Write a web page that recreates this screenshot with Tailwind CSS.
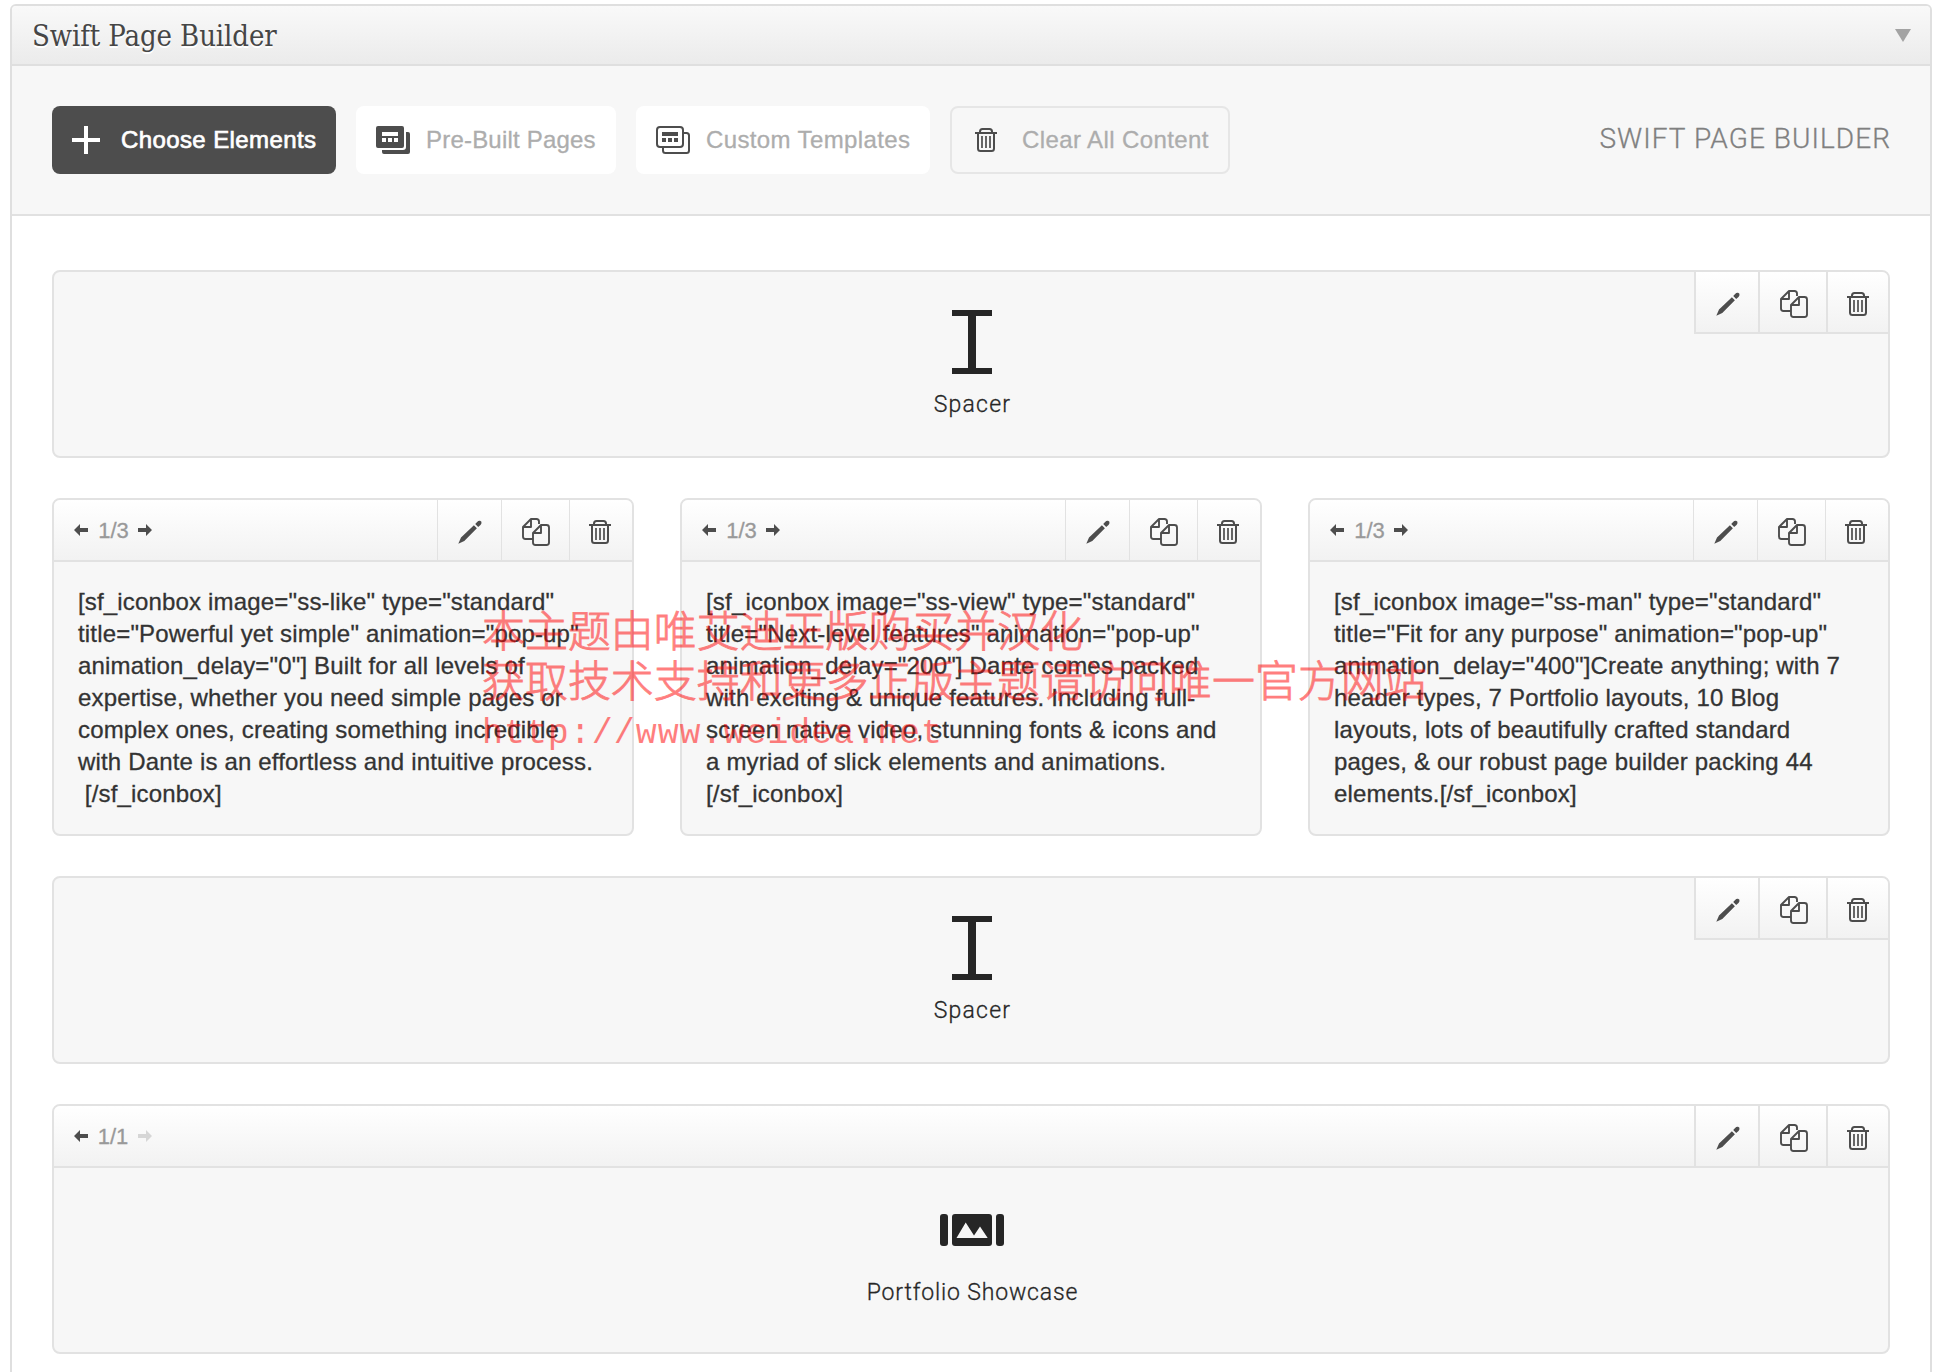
<!DOCTYPE html>
<html lang="en">
<head>
<meta charset="utf-8">
<title>Swift Page Builder</title>
<script src="https://cdn.jsdelivr.net/npm/@tailwindcss/browser@4"></script>
</head>
<body class="relative h-[1372px] overflow-hidden bg-white pt-1 pl-[10px] font-['Liberation_Sans',Arial,sans-serif] text-[#333]">

<!-- Icon set -->
<svg class="hidden">
  <symbol id="pencil" viewBox="0 0 24 24"><path fill="#4d4d4d" d="M.3 23.700 3 17.400 15.900 5.200l3 3L6.300 20.900zM17.200 4.100l1.900-2.100Q20.400.5 22 .8q1.800.4 1.500 2.300-.2 1.200-1 1.900L20.200 7z"/></symbol>
  <symbol id="copy" viewBox="0 0 28 28"><path fill="none" stroke="#4d4d4d" stroke-width="1.900" stroke-linejoin="round" d="M17 6V3.500Q17 1 14.500 1H9L1 9V18.500Q1 21 3.500 21H10.500M9 1V9H1M19 7H24.500Q27 7 27 9.500V24.500Q27 27 24.500 27H13.500Q11 27 11 24.500V15ZM19 7V15H11"/></symbol>
  <symbol id="trash" viewBox="0 0 22 24"><path fill="none" stroke="#4d4d4d" stroke-width="2" d="M0 5H22M3 5V20.500Q3 23 5.500 23H16.500Q19 23 19 20.500V5M5 5V3.500Q5 1 7.500 1H14.500Q17 1 17 3.500V5"/><path fill="none" stroke="#4d4d4d" stroke-width="1.700" d="M7 8V20M11 8V20M15 8V20"/></symbol>
  <symbol id="left" viewBox="0 0 14 12"><path fill="currentColor" d="M0 6 6 0V4H14V8H6V12z"/></symbol>
  <symbol id="right" viewBox="0 0 14 12"><path fill="currentColor" d="M14 6 8 0V4H0V8H8V12z"/></symbol>
  <symbol id="spacer" viewBox="0 0 40 64"><path fill="#262626" d="M0 0H40V6H24V58H40V64H0V58H16V6H0z"/></symbol>
</svg>

<div class="h-[1400px] w-[1922px] rounded-t-md border-2 border-[#dfdfdf]">
  <!-- Title bar -->
  <header class="flex h-[60px] items-center justify-between rounded-t border-b-2 border-[#dfdfdf] bg-linear-to-b from-[#f9f9f9] to-[#ebebeb] pr-[19px] pl-5">
    <h1 class="pt-0.5 font-['DejaVu_Serif_Condensed','DejaVu_Serif',serif] text-[29px] leading-none tracking-[-0.1px] text-[#464646] text-shadow-[0_2px_0_#fff]">Swift Page Builder</h1>
    <svg class="mt-px h-[13px] w-4" viewBox="0 0 16 13"><path fill="#a3a3a3" d="M0 0H16L8 13z"/></svg>
  </header>

  <!-- Toolbar -->
  <div class="flex h-[150px] items-center justify-between border-b-2 border-[#e1e1e1] bg-[#f7f7f7] px-10">
    <div class="flex gap-5 text-2xl leading-none tracking-[0.3px] text-[#adadad] [-webkit-text-stroke:0.3px_currentColor]">
      <button class="flex h-[68px] w-[284px] items-center gap-[21px] rounded-lg bg-[#4d4d4d] pl-5 tracking-[0.4px] text-white [-webkit-text-stroke:0.7px_white]">
        <svg class="size-7" viewBox="0 0 28 28"><path fill="#fff" d="M12 0h4v12h12v4H16v12h-4V16H0v-4h12z"/></svg>Choose Elements</button>
      <button class="flex h-[68px] w-[260px] items-center gap-4 rounded-lg bg-white pl-5 tracking-[0.2px]">
        <svg class="h-7 w-[34px]" viewBox="0 0 34 28"><path fill="#4d4d4d" fill-rule="evenodd" d="M2 0H26Q28 0 28 2V20Q28 22 26 22H2Q0 22 0 20V2Q0 0 2 0ZM6 6V10H22V6ZM6 12V16H10V12ZM12 12V16H16V12ZM18 12V16H22V12ZM30 6H32Q34 6 34 8V26Q34 28 32 28H8Q6 28 6 26V24H27Q30 24 30 21Z"/></svg>Pre-Built Pages</button>
      <button class="flex h-[68px] w-[294px] items-center gap-4 rounded-lg bg-white pl-5 tracking-[0.38px]">
        <svg class="h-7 w-[34px]" viewBox="0 0 34 28"><path fill="none" stroke="#4d4d4d" stroke-width="2" d="M4 1H24Q27 1 27 4V18Q27 21 24 21H4Q1 21 1 18V4Q1 1 4 1ZM28 7H30.500Q33 7 33 9.500V24.500Q33 27 30.500 27H9.500Q7 27 7 24.500V22"/><path fill="#4d4d4d" d="M6 6H22V10H6ZM6 12H10V16H6ZM12 12H16V16H12ZM18 12H22V16H18Z"/></svg>Custom Templates</button>
      <button class="flex h-[68px] w-[280px] items-center gap-[25px] rounded-lg border-2 border-[#e6e6e6] pl-[23px] tracking-[0.4px]">
        <svg class="h-6 w-[22px]"><use href="#trash"/></svg>Clear All Content</button>
    </div>
    <div class="-mr-px pb-[3px] font-['Roboto',sans-serif] text-[28px] leading-none font-light tracking-[1.05px] text-[#808080] [-webkit-text-stroke:0.3px_#808080]">SWIFT PAGE BUILDER</div>
  </div>

  <main class="flex flex-col gap-10 px-10 pt-[54px]">
    <!-- Spacer -->
    <section class="relative flex h-[188px] flex-col items-center rounded-lg border-2 border-[#e2e2e2] bg-[#f7f7f7] pt-[38px] pl-[2px]">
      <svg class="h-16 w-10"><use href="#spacer"/></svg>
      <div class="mt-[19px] pl-px font-['Roboto',sans-serif] text-[23px] leading-none font-light tracking-[1.2px] text-[#262626] [-webkit-text-stroke:0.3px_#262626]">Spacer</div>
      <div class="absolute top-0 right-0 flex h-[62px] overflow-hidden rounded-tr-md border-b-2 border-[#e2e2e2] bg-linear-to-b from-white to-[#f2f2f2]">
        <span class="w-16 border-l-2 border-[#e2e2e2] pt-5 pl-5"><svg class="size-6"><use href="#pencil"/></svg></span>
        <span class="w-[68px] border-l-2 border-[#e2e2e2] pt-[18px] pl-5"><svg class="size-7"><use href="#copy"/></svg></span>
        <span class="w-[62px] border-l-2 border-[#e2e2e2] pt-5 pl-[19px]"><svg class="h-6 w-[22px]"><use href="#trash"/></svg></span>
      </div>
    </section>

    <!-- Three columns -->
    <div class="grid grid-cols-3 gap-[46px]">
      <section class="h-[338px] overflow-hidden rounded-lg border-2 border-[#e2e2e2] bg-[#f7f7f7]">
        <div class="flex h-[62px] justify-between border-b-2 border-[#e2e2e2] bg-linear-to-b from-white to-[#f2f2f2]">
          <div class="flex items-center pl-5 text-[22px] leading-none text-[#999]">
            <svg class="h-3 w-3.5 text-[#4d4d4d]"><use href="#left"/></svg><span class="w-[50px] pt-0.5 pl-px text-center [-webkit-text-stroke:0.3px_#999]">1/3</span><svg class="h-3 w-3.5 text-[#4d4d4d]"><use href="#right"/></svg>
          </div>
          <div class="flex">
            <span class="w-16 border-l border-[#e2e2e2] pt-5 pl-5"><svg class="size-6"><use href="#pencil"/></svg></span>
            <span class="w-[68px] border-l border-[#e2e2e2] pt-[18px] pl-5"><svg class="size-7"><use href="#copy"/></svg></span>
            <span class="w-[63px] border-l border-[#e2e2e2] pt-5 pl-[19px]"><svg class="h-6 w-[22px]"><use href="#trash"/></svg></span>
          </div>
        </div>
        <p class="pt-6 pl-6 text-2xl leading-8 tracking-[0.17px] whitespace-nowrap [-webkit-text-stroke:0.3px_#333]">[sf_iconbox image="ss-like" type="standard"<br>title="Powerful yet simple" animation="pop-up"<br>animation_delay="0"] Built for all levels of<br>expertise, whether you need simple pages or<br>complex ones, creating something incredible<br>with Dante is an effortless and intuitive process.<br>&nbsp;[/sf_iconbox]</p>
      </section>
      <section class="h-[338px] overflow-hidden rounded-lg border-2 border-[#e2e2e2] bg-[#f7f7f7]">
        <div class="flex h-[62px] justify-between border-b-2 border-[#e2e2e2] bg-linear-to-b from-white to-[#f2f2f2]">
          <div class="flex items-center pl-5 text-[22px] leading-none text-[#999]">
            <svg class="h-3 w-3.5 text-[#4d4d4d]"><use href="#left"/></svg><span class="w-[50px] pt-0.5 pl-px text-center [-webkit-text-stroke:0.3px_#999]">1/3</span><svg class="h-3 w-3.5 text-[#4d4d4d]"><use href="#right"/></svg>
          </div>
          <div class="flex">
            <span class="w-16 border-l border-[#e2e2e2] pt-5 pl-5"><svg class="size-6"><use href="#pencil"/></svg></span>
            <span class="w-[68px] border-l border-[#e2e2e2] pt-[18px] pl-5"><svg class="size-7"><use href="#copy"/></svg></span>
            <span class="w-[63px] border-l border-[#e2e2e2] pt-5 pl-[19px]"><svg class="h-6 w-[22px]"><use href="#trash"/></svg></span>
          </div>
        </div>
        <p class="pt-6 pl-6 text-2xl leading-8 tracking-[0.19px] whitespace-nowrap [-webkit-text-stroke:0.3px_#333]">[sf_iconbox image="ss-view" type="standard"<br>title="Next-level features" animation="pop-up"<br>animation_delay="200"] Dante comes packed<br>with exciting &amp; unique features. Including full-<br>screen native video, stunning fonts &amp; icons and<br>a myriad of slick elements and animations.<br>[/sf_iconbox]</p>
      </section>
      <section class="h-[338px] overflow-hidden rounded-lg border-2 border-[#e2e2e2] bg-[#f7f7f7]">
        <div class="flex h-[62px] justify-between border-b-2 border-[#e2e2e2] bg-linear-to-b from-white to-[#f2f2f2]">
          <div class="flex items-center pl-5 text-[22px] leading-none text-[#999]">
            <svg class="h-3 w-3.5 text-[#4d4d4d]"><use href="#left"/></svg><span class="w-[50px] pt-0.5 pl-px text-center [-webkit-text-stroke:0.3px_#999]">1/3</span><svg class="h-3 w-3.5 text-[#4d4d4d]"><use href="#right"/></svg>
          </div>
          <div class="flex">
            <span class="w-16 border-l border-[#e2e2e2] pt-5 pl-5"><svg class="size-6"><use href="#pencil"/></svg></span>
            <span class="w-[68px] border-l border-[#e2e2e2] pt-[18px] pl-5"><svg class="size-7"><use href="#copy"/></svg></span>
            <span class="w-[63px] border-l border-[#e2e2e2] pt-5 pl-[19px]"><svg class="h-6 w-[22px]"><use href="#trash"/></svg></span>
          </div>
        </div>
        <p class="pt-6 pl-6 text-2xl leading-8 tracking-[0.18px] whitespace-nowrap [-webkit-text-stroke:0.3px_#333]">[sf_iconbox image="ss-man" type="standard"<br>title="Fit for any purpose" animation="pop-up"<br>animation_delay="400"]Create anything; with 7<br>header types, 7 Portfolio layouts, 10 Blog<br>layouts, lots of beautifully crafted standard<br>pages, &amp; our robust page builder packing 44<br>elements.[/sf_iconbox]</p>
      </section>
    </div>

    <!-- Spacer -->
    <section class="relative flex h-[188px] flex-col items-center rounded-lg border-2 border-[#e2e2e2] bg-[#f7f7f7] pt-[38px] pl-[2px]">
      <svg class="h-16 w-10"><use href="#spacer"/></svg>
      <div class="mt-[19px] pl-px font-['Roboto',sans-serif] text-[23px] leading-none font-light tracking-[1.2px] text-[#262626] [-webkit-text-stroke:0.3px_#262626]">Spacer</div>
      <div class="absolute top-0 right-0 flex h-[62px] overflow-hidden rounded-tr-md border-b-2 border-[#e2e2e2] bg-linear-to-b from-white to-[#f2f2f2]">
        <span class="w-16 border-l-2 border-[#e2e2e2] pt-5 pl-5"><svg class="size-6"><use href="#pencil"/></svg></span>
        <span class="w-[68px] border-l-2 border-[#e2e2e2] pt-[18px] pl-5"><svg class="size-7"><use href="#copy"/></svg></span>
        <span class="w-[62px] border-l-2 border-[#e2e2e2] pt-5 pl-[19px]"><svg class="h-6 w-[22px]"><use href="#trash"/></svg></span>
      </div>
    </section>

    <!-- Portfolio showcase -->
    <section class="h-[250px] overflow-hidden rounded-lg border-2 border-[#e2e2e2] bg-[#f7f7f7]">
      <div class="flex h-[62px] justify-between border-b-2 border-[#e2e2e2] bg-linear-to-b from-white to-[#f2f2f2]">
        <div class="flex items-center pl-5 text-[22px] leading-none text-[#999]">
          <svg class="h-3 w-3.5 text-[#4d4d4d]"><use href="#left"/></svg><span class="w-[50px] pt-0.5 text-center [-webkit-text-stroke:0.3px_#999]">1/1</span><svg class="h-3 w-3.5 text-[#d6d6d6]"><use href="#right"/></svg>
        </div>
        <div class="flex">
          <span class="w-16 border-l-2 border-[#e2e2e2] pt-5 pl-5"><svg class="size-6"><use href="#pencil"/></svg></span>
          <span class="w-[68px] border-l-2 border-[#e2e2e2] pt-[18px] pl-5"><svg class="size-7"><use href="#copy"/></svg></span>
          <span class="w-[62px] border-l-2 border-[#e2e2e2] pt-5 pl-[19px]"><svg class="h-6 w-[22px]"><use href="#trash"/></svg></span>
        </div>
      </div>
      <div class="flex flex-col items-center pt-[46px] pl-[2px]">
        <svg class="h-8 w-16" viewBox="0 0 64 32"><g fill="#262626"><rect width="8" height="32" rx="3"/><rect x="12" width="40" height="32" rx="3"/><rect x="56" width="8" height="32" rx="3"/></g><path fill="#f7f7f7" d="M16.500 24 25.700 8.500 34 21.500 40 12.500 47.700 24z"/></svg>
        <div class="mt-[35px] pl-px font-['Roboto',sans-serif] text-[23px] leading-none font-light tracking-[0.85px] text-[#262626] [-webkit-text-stroke:0.3px_#262626]">Portfolio Showcase</div>
      </div>
    </section>
  </main>
</div>

<!-- Translucent notice over the cards -->
<div class="pointer-events-none absolute top-[603px] left-[482px] font-['Noto_Sans_CJK_SC',sans-serif] text-[42.950px] leading-[50px] font-light whitespace-nowrap text-[#ff0000] opacity-50 [-webkit-text-stroke:0.9px_#ff0000]">
  <div>本主题由唯艾迪正版购买并汉化</div>
  <div>获取技术支持和更多正版主题请访问唯一官方网站</div>
  <div class="pt-1.5 font-['Liberation_Mono',monospace] text-[35px] tracking-[0.95px] [-webkit-text-stroke:0px_#ff0000]">http://www.weidea.net</div>
</div>
</body>
</html>
